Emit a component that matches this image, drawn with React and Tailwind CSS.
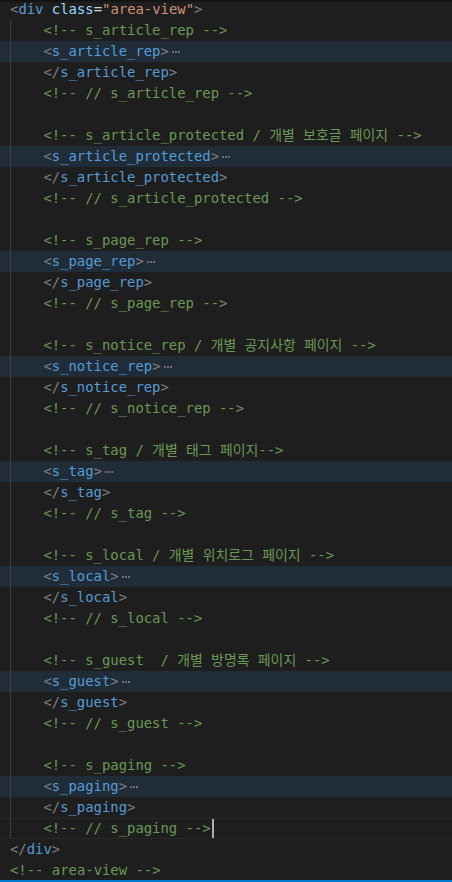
const GRAY = 'text-[#808080]';
const BLUE = 'text-[#569cd6]';
const GREEN = 'text-[#6a9955]';

function Comment({ text }) {
  return <span className={GREEN}>{text}</span>;
}

// folded region marker
function FoldDots() {
  return (
    <span className="ml-[3px] inline-flex items-center gap-[1px]">
      <span className="h-[2px] w-[2px] bg-[#6f6f6f]" />
      <span className="h-[2px] w-[2px] bg-[#6f6f6f]" />
      <span className="h-[2px] w-[2px] bg-[#6f6f6f]" />
    </span>
  );
}

function OpenTag({ name }) {
  return (
    <>
      <span className={GRAY}>&lt;</span>
      <span className={BLUE}>{name}</span>
      <span className={GRAY}>&gt;</span>
      <FoldDots />
    </>
  );
}

function CloseTag({ name }) {
  return (
    <>
      <span className={GRAY}>&lt;/</span>
      <span className={BLUE}>{name}</span>
      <span className={GRAY}>&gt;</span>
    </>
  );
}

const blocks = [
  ['s_article_rep', '<!-- s_article_rep -->'],
  ['s_article_protected', '<!-- s_article_protected / 개별 보호글 페이지 -->'],
  ['s_page_rep', '<!-- s_page_rep -->'],
  ['s_notice_rep', '<!-- s_notice_rep / 개별 공지사항 페이지 -->'],
  ['s_tag', '<!-- s_tag / 개별 태그 페이지-->'],
  ['s_local', '<!-- s_local / 개별 위치로그 페이지 -->'],
  ['s_guest', '<!-- s_guest  / 개별 방명록 페이지 -->'],
  ['s_paging', '<!-- s_paging -->'],
];

function buildLines() {
  const lines = [];
  blocks.forEach(([name, comment], i) => {
    lines.push({ content: <Comment text={comment} /> });
    lines.push({ content: <OpenTag name={name} />, folded: true });
    lines.push({ content: <CloseTag name={name} /> });
    const last = i === blocks.length - 1;
    lines.push({ content: <Comment text={`<!-- // ${name} -->`} />, current: last });
    if (!last) lines.push({ content: null });
  });
  return lines;
}

function Line({ indent, folded, current, children }) {
  return (
    <div
      className={`flex h-[21px] items-stretch pl-[10px] ${folded ? 'bg-[#202d39]' : ''} ${
        current ? 'border-y border-[#282828]' : ''
      }`}
    >
      {indent && <span className="w-[33.4px] shrink-0 border-l border-[#404040]" />}
      <span className={`flex items-center whitespace-pre ${current ? 'leading-[19px]' : 'leading-[21px]'}`}>
        {children}
        {current && <span className="ml-[1px] h-[19px] w-[2px] bg-[#aeafad]" />}
      </span>
    </div>
  );
}

export default function App() {
  const lines = buildLines();

  return (
    <div
      className="relative flex h-[882px] w-[452px] flex-col overflow-hidden bg-[#1e1e1e] text-[13.9px] text-[#d4d4d4]"
      style={{ fontFamily: "'DejaVu Sans Mono', 'Noto Sans CJK KR', monospace" }}
    >
      <div className="absolute left-0 right-0 top-0 h-[3px] bg-gradient-to-b from-black/50 to-transparent" />
      <div className="flex-1 overflow-hidden">
        <div className="-mt-px">
          <Line>
            <span className={GRAY}>&lt;</span>
            <span className={BLUE}>div</span>
            <span> </span>
            <span className="text-[#9cdcfe]">class</span>
            <span>=</span>
            <span className="text-[#ce9178]">"area-view"</span>
            <span className={GRAY}>&gt;</span>
          </Line>
          {lines.map((l, i) => (
            <Line key={i} indent folded={l.folded} current={l.current}>
              {l.content}
            </Line>
          ))}
          <Line>
            <CloseTag name="div" />
          </Line>
          <Line>
            <Comment text="<!-- area-view -->" />
          </Line>
        </div>
      </div>
      <div className="h-[2px] shrink-0 bg-[#007acc]" />
    </div>
  );
}
